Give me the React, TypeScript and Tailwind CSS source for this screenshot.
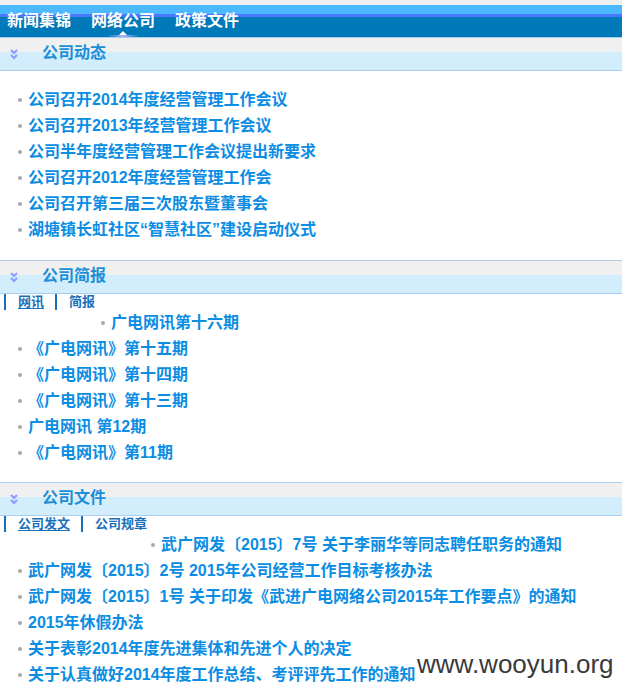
const navItems = ['新闻集锦', '网络公司', '政策文件']

const dongtai = [
  '公司召开2014年度经营管理工作会议',
  '公司召开2013年经营管理工作会议',
  '公司半年度经营管理工作会议提出新要求',
  '公司召开2012年度经营管理工作会',
  '公司召开第三届三次股东暨董事会',
  '湖塘镇长虹社区“智慧社区”建设启动仪式',
]

const jianbao = [
  '广电网讯第十六期',
  '《广电网讯》第十五期',
  '《广电网讯》第十四期',
  '《广电网讯》第十三期',
  '广电网讯 第12期',
  '《广电网讯》第11期',
]

const wenjian = [
  '武广网发〔2015〕7号 关于李丽华等同志聘任职务的通知',
  '武广网发〔2015〕2号 2015年公司经营工作目标考核办法',
  '武广网发〔2015〕1号 关于印发《武进广电网络公司2015年工作要点》的通知',
  '2015年休假办法',
  '关于表彰2014年度先进集体和先进个人的决定',
  '关于认真做好2014年度工作总结、考评评先工作的通知',
]

function SectionHeader({ title }: { title: string }) {
  return (
    <div className="h-[34px] border-y border-[#a8cff0] bg-[linear-gradient(to_bottom,#f0f0f0_0,#f0f0f0_14px,#d2eefc_14px,#d2eefc_100%)] flex items-center">
      <svg width="8" height="11" viewBox="0 0 8 11" className="ml-[10px] mt-[1px]">
        <path d="M1 1 L4 4 L7 1" fill="none" stroke="#8c9cff" strokeWidth="2" />
        <path d="M1 6 L4 9 L7 6" fill="none" stroke="#8c9cff" strokeWidth="2" />
      </svg>
      <span className="ml-[24px] text-[16px] font-bold text-[#1b8fd9] leading-[20px] -mt-[3px]">{title}</span>
    </div>
  )
}

function Item({ text, indent = 0 }: { text: string; indent?: number }) {
  return (
    <li className="h-[26px] flex items-center pl-[18px]" style={indent ? { paddingLeft: 18 + indent } : undefined}>
      <span className="w-[4px] h-[4px] rounded-full bg-[#a8a8a8] mr-[6px] shrink-0" />
      <span className="text-[16px] font-bold text-[#0b8de4] leading-[26px] whitespace-nowrap">{text}</span>
    </li>
  )
}

function Tabs({ tabs }: { tabs: string[] }) {
  return (
    <div className="h-4 flex items-stretch pl-[4px]">
      {tabs.map((t, i) => (
        <div key={t} className="flex items-stretch">
          <span className="w-[2px] bg-[#1a6fba]" />
          <span
            className={`ml-[12px] mr-[11px] text-[13px] font-bold leading-4 text-[#1a6fba] ${i === 0 ? 'underline underline-offset-2' : ''}`}
          >
            {t}
          </span>
        </div>
      ))}
    </div>
  )
}

function App() {
  return (
    <div
      className="relative bg-white min-h-[696px] w-[622px] overflow-hidden"
      style={{ fontFamily: '"Liberation Sans", "Noto Sans CJK SC", sans-serif' }}
    >
      <div className="h-[5px] bg-[#f0f0f0]" />

      {/* 导航 */}
      <nav className="h-[32px] bg-[linear-gradient(to_bottom,#4cb8ff_0,#4cb8ff_9px,#4a78ff_9px,#4a78ff_12px,#0079b8_12px,#0079b8_100%)] flex gap-5 pl-[7px] pt-[6px]">
        {navItems.map((n, i) => (
          <span key={n} className="relative text-[16px] font-bold text-white leading-[20px] h-[26px]">
            {n}
            {i === 1 && (
              <span className="absolute bottom-0 left-[16px] w-[32px] flex flex-col items-center">
                <span className="w-0 h-0 border-x-[4px] border-x-transparent border-b-[4px] border-b-white" />
                <span className="w-full h-[2px] bg-[linear-gradient(to_right,transparent,#a8b4ff,transparent)]" />
              </span>
            )}
          </span>
        ))}
      </nav>

      {/* 公司动态 */}
      <SectionHeader title="公司动态" />
      <ul className="pt-[16px] pb-[17px]">
        {dongtai.map((t) => (
          <Item key={t} text={t} />
        ))}
      </ul>

      {/* 公司简报 */}
      <SectionHeader title="公司简报" />
      <Tabs tabs={['网讯', '简报']} />
      <ul className="pb-[16px]">
        {jianbao.map((t, i) => (
          <Item key={t} text={t} indent={i === 0 ? 83 : 0} />
        ))}
      </ul>

      {/* 公司文件 */}
      <SectionHeader title="公司文件" />
      <Tabs tabs={['公司发文', '公司规章']} />
      <ul>
        {wenjian.map((t, i) => (
          <Item key={t} text={t} indent={i === 0 ? 133 : 0} />
        ))}
      </ul>

      <span className="absolute left-[417px] top-[651px] text-[26px] leading-none text-[#3a3a3a]">
        www.wooyun.org
      </span>
    </div>
  )
}

export default App
